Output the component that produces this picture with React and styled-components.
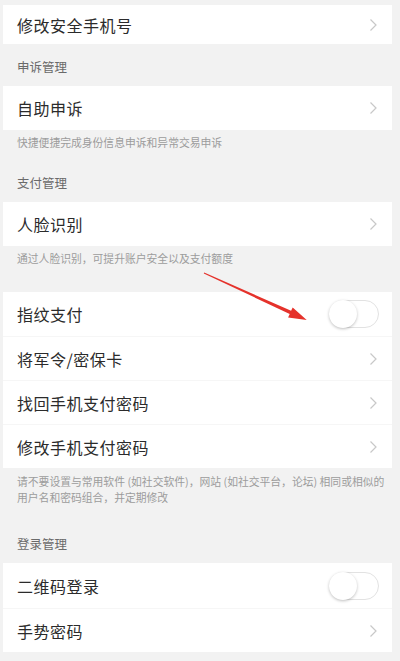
import styled, { createGlobalStyle } from "styled-components";

const GlobalStyle = createGlobalStyle`
  html, body {
    margin: 0;
    padding: 0;
    background: #f2f2f2;
  }
  body {
    font-family: "Noto Sans CJK SC", "Noto Sans", sans-serif;
  }
`;

const Page = styled.div`
  position: relative;
  width: 400px;
  height: 661px;
  overflow: hidden;
  background: #f2f2f2;
  padding-top: 5px;
  box-sizing: border-box;
`;

const Group = styled.div`
  background: #ffffff;
  margin: ${({ top }) => top || 0}px 8px 0 3px;
`;

const Row = styled.div`
  display: flex;
  align-items: center;
  justify-content: space-between;
  height: ${({ h }) => h || 44}px;
  padding: 0 14px 0 14px;
  box-sizing: border-box;
  border-top: ${({ first }) => (first ? "none" : "1px solid #f6f6f6")};
`;

const Label = styled.span`
  font-size: 16px;
  letter-spacing: 0.5px;
  color: #2b2b2b;
  line-height: 1;
`;

const SectionHeader = styled.div`
  padding: ${({ top }) => top || 14}px 17px 10px;
  font-size: 12.5px;
  line-height: 18px;
  color: #6a6a6a;
`;

const Caption = styled.div`
  padding: 5px 8px 11px 17px;
  font-size: 10.8px;
  line-height: ${({ lh }) => lh || 14}px;
  color: #9c9c9c;
  white-space: nowrap;
`;

const ToggleTrack = styled.div`
  position: relative;
  width: 50px;
  height: 28px;
  border-radius: 14px;
  border: 1px solid #e2e2e2;
  box-sizing: border-box;
  background: #ffffff;
  margin-right: -1px;
`;

const ToggleKnob = styled.div`
  position: absolute;
  left: -1px;
  top: -1px;
  width: 28px;
  height: 28px;
  border-radius: 50%;
  background: #ffffff;
  box-shadow: 0 1px 3px rgba(0, 0, 0, 0.25);
`;

const Overlay = styled.svg`
  position: absolute;
  left: 0;
  top: 0;
  pointer-events: none;
`;

function Chevron() {
  return (
    <svg width="10" height="14" viewBox="0 0 10 14">
      <path d="M2.5 1.5 L8 7 L2.5 12.5" fill="none" stroke="#c8c8c8" strokeWidth="1.2" />
    </svg>
  );
}

function Toggle() {
  return (
    <ToggleTrack>
      <ToggleKnob />
    </ToggleTrack>
  );
}

function Item({ label, toggle, first, h }) {
  return (
    <Row first={first} h={h}>
      <Label>{label}</Label>
      {toggle ? <Toggle /> : <Chevron />}
    </Row>
  );
}

export default function App() {
  return (
    <>
      <GlobalStyle />
      <Page>
        <Group>
          <Item first h={39} label="修改安全手机号" />
        </Group>
        <SectionHeader>申诉管理</SectionHeader>
        <Group>
          <Item first label="自助申诉" />
        </Group>
        <Caption>快捷便捷完成身份信息申诉和异常交易申诉</Caption>
        <SectionHeader>支付管理</SectionHeader>
        <Group>
          <Item first label="人脸识别" />
        </Group>
        <Caption>通过人脸识别，可提升账户安全以及支付额度</Caption>
        <Group top={16}>
          <Item first toggle label="指纹支付" />
          <Item label="将军令/密保卡" />
          <Item label="找回手机支付密码" />
          <Item label="修改手机支付密码" />
        </Group>
        <Caption lh={16}>
          请不要设置与常用软件 (如社交软件)，网站 (如社交平台，论坛) 相同或相似的
          <br />
          用户名和密码组合，并定期修改
        </Caption>
        <SectionHeader top={19}>登录管理</SectionHeader>
        <Group>
          <Item first toggle h={45} label="二维码登录" />
          <Item h={44} label="手势密码" />
        </Group>
        <Overlay width="400" height="661" viewBox="0 0 400 661">
          <polygon
            points="204.2,272.55 291.1,310.8 292.7,307.4 306.7,319.9 288.1,317.4 289.7,314.0 203.8,273.45"
            fill="#e5322b"
          />
        </Overlay>
      </Page>
    </>
  );
}
